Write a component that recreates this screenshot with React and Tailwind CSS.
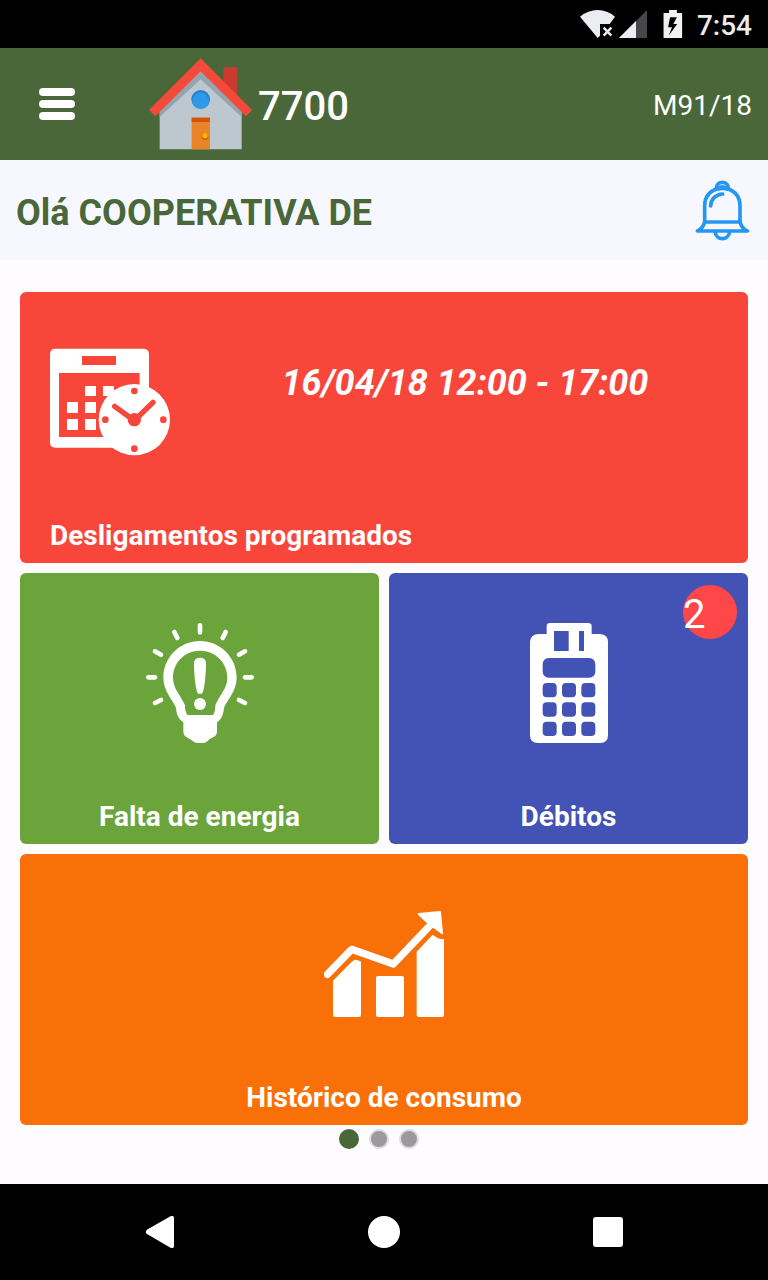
const range = (n) => Array.from({ length: n }, (_, i) => i);

function StatusBar() {
  return (
    <div className="flex h-12 items-center justify-end bg-black pr-4 text-white">
      <svg className="mr-1 h-7 w-[35px]" viewBox="38 30 105 84" aria-hidden="true">
        <path d="M38 50 Q62 30 91 30 Q120 30 143 50 L127 72 H98 V107 L91 114 Z" fill="#ececf3" />
        <path d="M109 83 L132 107 M132 83 L109 107" stroke="#ececf3" strokeWidth="7" />
      </svg>
      <svg className="mr-4 h-7 w-7" viewBox="0 0 28 28" aria-hidden="true">
        <path d="M28 0 V28 H0 Z" fill="#48464a" />
        <path d="M17 11 V28 H0 Z" fill="#ececf3" />
      </svg>
      <svg className="mr-3.5 h-7 w-5" viewBox="287 27 60 86" aria-hidden="true">
        <path d="M305 27 H329 V36 H345 V113 H288 V36 H305 Z" fill="#f2f2f2" />
        <path d="M308 49 L302 80 H314 L304 105 L330 70 H318 L329 49 Z" fill="#000" />
      </svg>
      <span className="pt-1 text-[28px] leading-8 font-medium text-[#ececec]">7:54</span>
    </div>
  );
}

function House() {
  return (
    <svg className="h-[92px] w-[103px]" viewBox="388 30 309 276" aria-hidden="true">
      <path d="M611 58 H653 V150 L611 110 Z" fill="#cb3a30" />
      <path d="M420 180 L543 60 L666 180 V304 H420 Z" fill="#bcc7cf" />
      <path d="M420 176 L543 58 L666 176 V207 L543 94 L420 207 Z" fill="#94a5ad" />
      <path d="M543 31 L697 186 L679 205 L543 70 L407 205 L388 186 Z" fill="#f5493a" />
      <circle cx="543" cy="154" r="28" fill="#2383d0" />
      <path d="M518 165 C519 122 567 122 568 165 C561 188 526 188 518 165 Z" fill="#2c9ae8" />
      <rect x="516" y="209" width="55" height="95" fill="#ea8429" />
      <path d="M516 209 H571 V222 H516 Z" fill="#d45304" />
      <circle cx="556" cy="266" r="10" fill="#c66612" />
      <circle cx="556" cy="263" r="8" fill="#ffb400" />
    </svg>
  );
}

function Bell() {
  return (
    <svg
      className="h-[61px] w-[55px]"
      viewBox="164 358 165 183"
      fill="none"
      stroke="#2696f3"
      strokeWidth="11"
      strokeLinecap="round"
      strokeLinejoin="round"
      aria-hidden="true"
    >
      <path d="M228 383 C228 372 235 365 246 365 C257 365 264 372 264 383" />
      <path d="M234 384 C241 377 251 377 258 384" />
      <path d="M193 484 V436 C193 404 214 383 246 383 C278 383 299 404 299 436 V484" />
      <path d="M193 484 H299 C303 499 309 506 321 511 H171 C183 506 189 499 193 484 Z" />
      <path d="M211 436 C211 416 226 401 247 400" />
      <path d="M224 513 C227 541 265 541 268 513" />
    </svg>
  );
}

function CalendarClock() {
  return (
    <svg className="size-[120px] shrink-0" viewBox="120 36 360 360" fill="#fff" aria-hidden="true">
      <path
        fillRule="evenodd"
        d="M136 56 H400 Q417 56 417 73 V353 H136 Q120 353 120 337 V73 Q120 56 136 56 Z M216 78 V105 H318 V78 Z M147 129 V321 H389 V129 Z"
      />
      <path d="M225 168 H258 V198 H225 Z M279 168 H312 V198 H279 Z M171 216 H204 V249 H171 Z M225 216 H258 V249 H225 Z M171 267 H204 V300 H171 Z M225 267 H258 V300 H225 Z" />
      <path d="M400 269 H440 V370 H400 Z" fill="#f9463b" />
      <circle cx="373" cy="269" r="107" />
      <g fill="#f9463b">
        <circle cx="373" cy="183" r="10" />
        <circle cx="373" cy="356" r="10" />
        <circle cx="286" cy="269" r="10" />
        <circle cx="460" cy="269" r="10" />
        <circle cx="373" cy="269" r="20" />
        <path d="M314 229 L373 272 L429 217" fill="none" stroke="#f9463b" strokeWidth="16" strokeLinecap="round" />
      </g>
    </svg>
  );
}

function Bulb() {
  return (
    <svg className="size-[120px]" viewBox="30 39 360 360" fill="#fff" aria-hidden="true">
      <g stroke="#fff" strokeWidth="14" strokeLinecap="round">
        <path d="M210 46 V67 M133 66 L142 84 M287 66 L278 84 M75 124 L93 134 M345 124 L327 134 M55 202 H75 M345 202 H365 M75 279 L93 270 M345 279 L327 270" />
      </g>
      <path
        fillRule="evenodd"
        d="M210 93 C149 93 100 142 100 203 C100 243 127 267 138 293 C139 312 145 327 160 337 V364 Q160 378 172 383 Q181 386 189 394 Q195 399 202 399 H219 Q227 399 233 393 Q240 385 249 382 Q261 377 261 364 V337 C276 327 280 312 282 293 C293 267 320 243 320 203 C320 142 271 93 210 93 Z M210 122 C256 122 292 158 292 203 C292 237 268 254 256 286 C256 300 254 309 249 315 H173 C167 309 165 300 165 286 C152 254 129 237 129 203 C129 158 164 122 210 122 Z"
      />
      <path d="M192 160 Q192 143 210 143 Q228 143 228 160 Q228 210 219 246 Q217 252 210 252 Q203 252 201 246 Q192 210 192 160 Z" />
      <circle cx="210" cy="282" r="18" />
    </svg>
  );
}

function CardMachine() {
  return (
    <svg className="size-[120px]" viewBox="27 159 360 360" aria-hidden="true">
      <path
        d="M140 192 V169 Q140 159 150 159 H264 Q275 159 275 169 V192 H300 Q324 194 324 216 V495 Q324 519 300 519 H114 Q90 519 90 495 V216 Q92 194 114 192 Z"
        fill="#fff"
      />
      <g fill="#4252b5">
        <rect x="162" y="183" width="44" height="60" />
        <rect x="237" y="183" width="15" height="60" />
        <rect x="128" y="264" width="158" height="59" rx="18" />
        {range(9).map((i) => (
          <rect
            key={i}
            x={128 + (i % 3) * 58}
            y={339 + Math.floor(i / 3) * 58}
            width="42"
            height="43"
            rx="12"
          />
        ))}
      </g>
    </svg>
  );
}

function Chart() {
  return (
    <svg className="size-[120px]" viewBox="42 24 360 360" fill="#fff" aria-hidden="true">
      <path d="M69 254 L127 196 Q133 190 140 192 L150 195 Q153 196 153 200 V357 Q153 363 147 363 H75 Q69 363 69 357 Z" />
      <rect x="198" y="240" width="84" height="123" rx="6" />
      <path d="M320 167 L368 116 L384 127 Q391 131 402 128 V357 Q402 363 396 363 H326 Q320 363 320 357 Z" />
      <path
        d="M52 235 L125 160 L250 204 L370 78"
        fill="none"
        stroke="#fff"
        strokeWidth="22"
        strokeLinecap="round"
        strokeLinejoin="round"
      />
      <path d="M326 51 L389 45 Q393 45 393 49 L399 111 Q399 117 394 113 L370 96 L347 78 L325 58 Q321 52 326 51 Z" />
    </svg>
  );
}

const tile = "relative flex h-[271px] flex-col justify-between rounded-md pt-[50px] pb-[9px] text-white";
const label = "text-[28px] leading-9 font-bold";

export default function App() {
  return (
    <div className="flex min-h-screen flex-col bg-[#fffcff] font-['Roboto',sans-serif]">
      <StatusBar />
      <header className="flex h-28 items-center bg-[#4a673a] pr-4 pl-[39px] text-white">
        <button type="button" aria-label="Menu" className="mr-[74px] flex w-9 flex-col gap-1">
          <span className="h-2 rounded-full bg-white" />
          <span className="h-2 rounded-full bg-white" />
          <span className="h-2 rounded-full bg-white" />
        </button>
        <House />
        <span className="ml-1.5 pt-1.5 text-[40px] leading-[48px] font-medium">7700</span>
        <span className="ml-auto pt-1 text-[28px] leading-8">M91/18</span>
      </header>
      <section className="flex h-[100px] items-center justify-between bg-[#f7f8ff] pr-[18px] pl-4">
        <h1 className="pt-1.5 text-[36px] leading-10 font-bold text-[#4a673a]">Olá COOPERATIVA DE</h1>
        <button type="button" aria-label="Notificações">
          <Bell />
        </button>
      </section>
      <main className="flex flex-1 flex-col px-5 pt-8">
        <div className="grid grid-cols-2 gap-2.5">
          <button type="button" className={`${tile} col-span-2 bg-[#f9463b] pl-[30px] text-left`}>
            <span className="flex w-full items-start">
              <CalendarClock />
              <span className="ml-3 flex-1 pt-[21px] text-center text-[36px] leading-10 font-bold italic">
                16/04/18 12:00 - 17:00
              </span>
            </span>
            <span className={label}>Desligamentos programados</span>
          </button>
          <button type="button" className={`${tile} items-center bg-[#6ba43a]`}>
            <Bulb />
            <span className={label}>Falta de energia</span>
          </button>
          <button type="button" className={`${tile} items-center bg-[#4252b5]`}>
            <CardMachine />
            <span className={label}>Débitos</span>
            <span className="absolute top-3 right-[11px] flex size-[54px] items-center rounded-full bg-[#ff474a] pt-1.5 text-[40px] leading-[48px]">
              2
            </span>
          </button>
          <button type="button" className={`${tile} col-span-2 items-center bg-[#f96f08]`}>
            <Chart />
            <span className={label}>Histórico de consumo</span>
          </button>
        </div>
        <div className="mt-1 flex justify-center">
          <button type="button" aria-label="Página 1" className="mr-2.5 size-5 rounded-full bg-[#4a673a]" />
          <button type="button" aria-label="Página 2" className="mr-2.5 size-5 rounded-full border-2 border-[#dedcde] bg-[#9b999c]" />
          <button type="button" aria-label="Página 3" className="mr-2.5 size-5 rounded-full border-2 border-[#dedcde] bg-[#9b999c]" />
        </div>
      </main>
      <nav className="grid h-24 grid-cols-3 place-items-center bg-black px-12">
        <button type="button" aria-label="Voltar">
          <svg className="size-8" viewBox="0 0 32 32" aria-hidden="true">
            <path d="M1.5 14.5 L26.5 0.3 Q30 -1 30 2 V30 Q30 33 26.5 31.7 L3 18 Q0.5 16 3 14 Z" fill="#fff" />
          </svg>
        </button>
        <button type="button" aria-label="Início" className="size-8 rounded-full bg-white" />
        <button type="button" aria-label="Recentes" className="size-[30px] rounded-[3px] bg-white" />
      </nav>
    </div>
  );
}
